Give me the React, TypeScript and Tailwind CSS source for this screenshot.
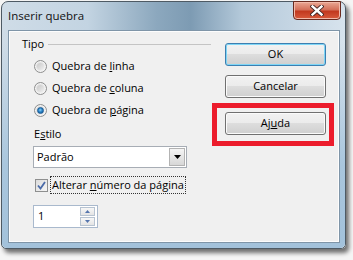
import React from "react";

function Radio({ checked }: { checked?: boolean }) {
  return (
    <div className="w-[13px] h-[13px] rounded-full border border-[#8e8f8f] bg-[linear-gradient(135deg,#d8d8d8,#f6f6f6)] flex items-center justify-center shadow-[inset_0_0_0_1px_#f4f4f4]">
      {checked ? (
        <div className="w-[7px] h-[7px] rounded-full bg-[radial-gradient(circle_at_45%_40%,#8fd1f7_0%,#2b86c9_45%,#0f4f8d_100%)] border border-[#1b5a94]" />
      ) : (
        <div className="w-[7px] h-[7px] rounded-full bg-[linear-gradient(135deg,#c9c9c9,#eeeeee)]" />
      )}
    </div>
  );
}

function Btn({ children, def }: { children: React.ReactNode; def?: boolean }) {
  return (
    <div
      className={
        "w-[101px] h-[23px] rounded-[3px] border flex items-center justify-center text-[11px] text-black bg-[linear-gradient(#f2f2f2_0%,#ebebeb_49%,#dddddd_50%,#cfcfcf_100%)] " +
        (def
          ? "border-[#3c7fb1] shadow-[inset_0_0_0_1px_#7fd6f6]"
          : "border-[#707070] shadow-[inset_0_0_0_1px_#fbfbfb]")
      }
    >
      {children}
    </div>
  );
}

export default function App() {
  return (
    <div className="w-[353px] h-[260px] bg-[#f5f5f5] overflow-hidden font-['Open_Sans',sans-serif] pt-[1px] pl-[1px]">
      <div className="relative w-[345px] h-[248px] rounded-t-[7px] rounded-b-[5px] border border-[#4e5a64] shadow-[3px_4px_4px_rgba(0,0,0,0.55)] bg-[linear-gradient(90deg,#cfdce7_0%,#c3d4e2_25%,#8ca8be_45%,#7d9bb3_55%,#b4c9da_70%,#d7e3ed_100%)]">
        {/* lower frame tint */}
        <div className="absolute inset-x-0 bottom-0 top-[40px] rounded-b-[5px] bg-[linear-gradient(#a9c6dd00_0%,#a9c6dd_60%,#a3c2db_100%)]" />
        {/* title bar */}
        <div className="relative h-[28px] flex items-center pl-[6px] text-[11.5px] text-[#111]">
          Inserir quebra
        </div>
        {/* close button */}
        <div className="absolute top-[-1px] right-[4px] w-[48px] h-[19px] rounded-b-[4px] border border-[#6a2a1f] bg-[linear-gradient(#eaa894_0%,#d4705a_45%,#c2391f_55%,#d85a3c_100%)] shadow-[inset_0_0_0_1px_#f2b9a9] flex items-center justify-center">
          <svg width="14" height="11" viewBox="0 0 14 11">
            <path d="M2.5 1.5 L11.5 9.5 M11.5 1.5 L2.5 9.5" stroke="#3b2020" strokeWidth="4.2" strokeLinecap="square" />
            <path d="M2.5 1.5 L11.5 9.5 M11.5 1.5 L2.5 9.5" stroke="#ffffff" strokeWidth="2.4" strokeLinecap="square" />
          </svg>
        </div>
        {/* client */}
        <div className="relative ml-[6px] w-[332px] h-[213px] bg-[#f0f0f0] border border-[#7f95a8] shadow-[inset_0_0_0_1px_#fdfdfd] flex text-[11px] text-black">
          {/* left column */}
          <div className="w-[203px] flex flex-col">
            <div className="mt-[5px] h-[16px] flex items-center pl-[13px]">
              <span>Tipo</span>
              <div className="flex-1 h-px bg-[#c4c4c4] ml-[4px] mr-[1px]" />
            </div>
            <div className="mt-[3px] flex flex-col pl-[25px]">
              <div className="h-[22px] flex items-center gap-[5px]">
                <Radio />
                <span>Quebra de <span className="underline">l</span>inha</span>
              </div>
              <div className="h-[22px] flex items-center gap-[5px]">
                <Radio />
                <span>Quebra de <span className="underline">c</span>oluna</span>
              </div>
              <div className="h-[22px] flex items-center gap-[5px]">
                <Radio checked />
                <span>Quebra de <span className="underline">p</span>ágina</span>
              </div>
            </div>
            <div className="mt-[5px] h-[16px] flex items-center pl-[25px]">
              <span>E<span className="underline">s</span>tilo</span>
            </div>
            <div className="mt-[4px] ml-[24px] w-[154px] h-[22px] border border-[#a7adb5] bg-white flex items-center pl-[3px] pr-[1px]">
              <span className="flex-1">Padrão</span>
              <div className="w-[16px] h-[18px] border border-[#b3b3b3] bg-[linear-gradient(#f5f5f5,#d7d7d7)] flex items-center justify-center">
                <svg width="7" height="4" viewBox="0 0 7 4">
                  <path d="M0 0 H7 L3.5 4 Z" fill="#000" />
                </svg>
              </div>
            </div>
            <div className="mt-[8px] ml-[26px] h-[18px] flex items-center gap-[2px]">
              <div className="w-[13px] h-[13px] border border-[#8e8f8f] bg-[linear-gradient(135deg,#dcdcdc,#f5f5f5)] flex items-center justify-center">
                <svg width="9" height="9" viewBox="0 0 9 9">
                  <path d="M1 4.5 L3.5 7.5 L8 1" stroke="#4a6aa8" strokeWidth="1.8" fill="none" />
                </svg>
              </div>
              <div className="h-[18px] border border-dotted border-[#333] flex items-center px-[1px]">
                <span>Alterar <span className="underline">n</span>úmero da página</span>
              </div>
            </div>
            <div className="mt-[11px] ml-[24px] w-[65px] h-[23px] border border-[#a9b9cd] bg-white flex items-center pl-[4px] pr-[2px]">
              <span className="flex-1">1</span>
              <div className="w-[15px] h-[19px] flex flex-col">
                <div className="h-[9px] border border-[#b7c3d1] bg-[linear-gradient(#f7f7f7,#e4e4e4)] flex items-center justify-center">
                  <svg width="5" height="3" viewBox="0 0 5 3"><path d="M0 3 L2.5 0 L5 3 Z" fill="#5575ad" /></svg>
                </div>
                <div className="h-[9px] mt-[1px] border border-[#b7c3d1] bg-[linear-gradient(#f7f7f7,#e4e4e4)] flex items-center justify-center">
                  <svg width="5" height="3" viewBox="0 0 5 3"><path d="M0 0 L2.5 3 L5 0 Z" fill="#5575ad" /></svg>
                </div>
              </div>
            </div>
          </div>
          {/* right column */}
          <div className="flex flex-col pl-[13px] pt-[12px]">
            <Btn def>OK</Btn>
            <div className="mt-[9px]">
              <Btn>Cancelar</Btn>
            </div>
            <div className="mt-[14px]">
              <Btn>
                <span>Aj<span className="underline">u</span>da</span>
              </Btn>
            </div>
          </div>
          {/* red annotation box */}
          <div className="absolute left-[203px] top-[72px] w-[122px] h-[43px] border-[5px] border-[#ec1c2c]" />
        </div>
      </div>
    </div>
  );
}
